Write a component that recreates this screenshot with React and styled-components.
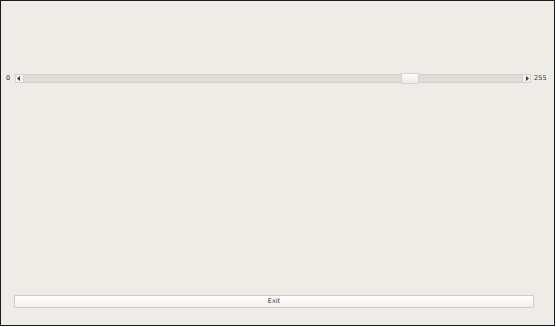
import React from "react";
import styled, { createGlobalStyle } from "styled-components";

const Global = createGlobalStyle`
  html, body { margin: 0; padding: 0; background: #ffffff; }
  body { font-family: "DejaVu Sans", "Liberation Sans", sans-serif; }
`;

const Window = styled.div`
  box-sizing: border-box;
  width: 555px;
  height: 326px;
  border: 1px solid #1a1a1a;
  background: #efebe7;
  display: flex;
  flex-direction: column;
`;

const SliderRow = styled.div`
  display: flex;
  align-items: center;
  margin-top: 72px;
  height: 10px;
  padding-left: 5px;
`;

const Label = styled.span`
  font-size: 6.5px;
  color: #333333;
  width: ${(p) => p.$w}px;
  margin-left: ${(p) => p.$ml || 0}px;
  line-height: 10px;
`;

const Trough = styled.div`
  box-sizing: border-box;
  width: 519px;
  height: 9px;
  background: #dfdcd8;
  border: 1px solid #d5d2cd;
  display: flex;
  align-items: stretch;
  position: relative;
`;

const Arrow = styled.div`
  width: 7px;
  background: #f2f1ef;
  display: flex;
  align-items: center;
  justify-content: center;
  border-right: ${(p) => (p.$side === "left" ? "1px solid #d5d2cd" : "none")};
  border-left: ${(p) => (p.$side === "right" ? "1px solid #d5d2cd" : "none")};
`;

const Track = styled.div`
  flex: 1;
  position: relative;
`;

const Thumb = styled.div`
  position: absolute;
  top: -2px;
  bottom: -2px;
  width: 18px;
  box-sizing: border-box;
  background: linear-gradient(#fdfdfc, #ecebe9);
  border: 1px solid #d6d3ce;
  border-radius: 1px;
`;

const Spacer = styled.div`
  flex: 1;
`;

const ButtonRow = styled.div`
  padding: 0 20px 17px 13px;
`;

const Button = styled.button`
  box-sizing: border-box;
  width: 520px;
  height: 13px;
  padding: 0;
  margin: 0;
  border: 1px solid #cfccc7;
  border-radius: 1px;
  background: linear-gradient(#ffffff, #f1f0ee);
  font-family: "DejaVu Sans", "Liberation Sans", sans-serif;
  font-size: 6.5px;
  color: #333333;
  line-height: 11px;
  display: block;
`;

const Tri = ({ dir }) => (
  <svg width="4" height="5" viewBox="0 0 4 5">
    {dir === "left" ? (
      <polygon points="3,0 3,5 0,2.5" fill="#3a3a3a" />
    ) : (
      <polygon points="1,0 1,5 4,2.5" fill="#3a3a3a" />
    )}
  </svg>
);

export default function App() {
  return (
    <>
      <Global />
      <Window>
        <SliderRow>
          <Label $w={9}>0</Label>
          <Trough>
            <Arrow $side="left">
              <Tri dir="left" />
            </Arrow>
            <Track>
              <Thumb style={{ left: `${(376 / 497) * 100}%` }} />
            </Track>
            <Arrow $side="right">
              <Tri dir="right" />
            </Arrow>
          </Trough>
          <Label $w={20} $ml={3}>255</Label>
        </SliderRow>
        <Spacer />
        <ButtonRow>
          <Button>Exit</Button>
        </ButtonRow>
      </Window>
    </>
  );
}
